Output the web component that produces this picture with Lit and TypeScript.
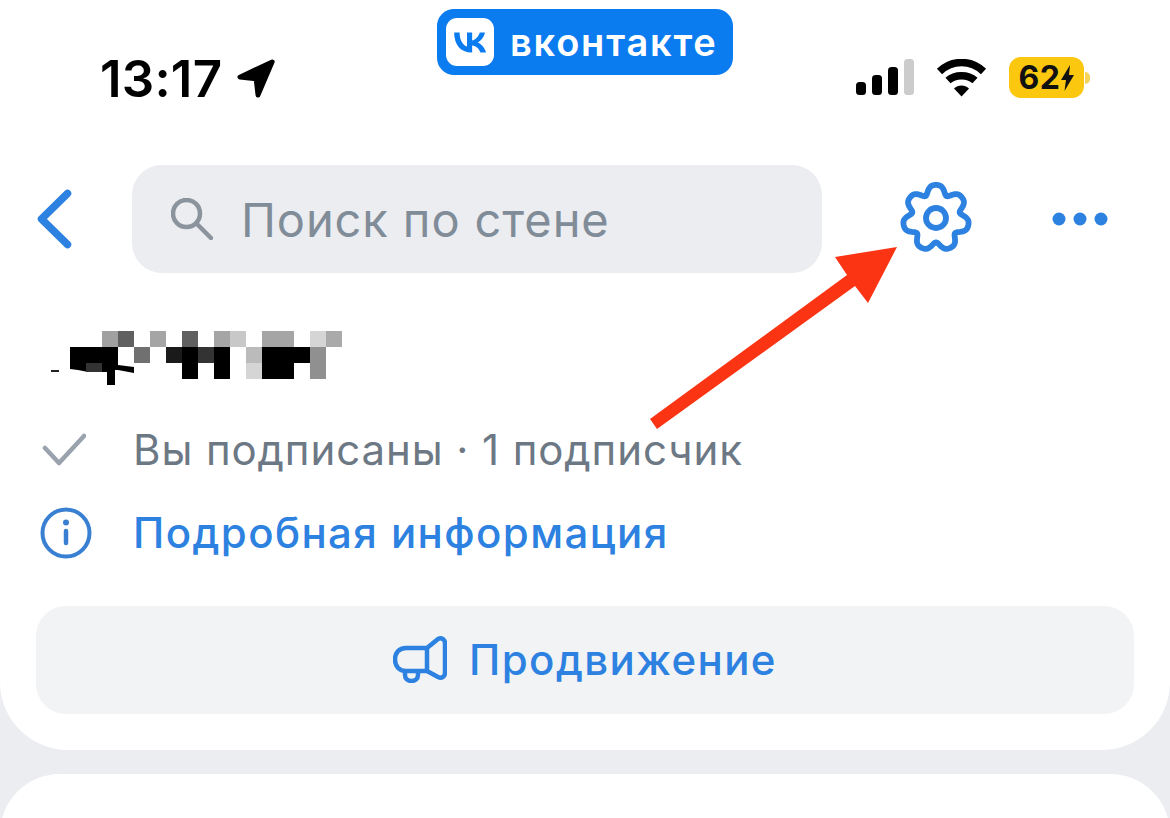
import { LitElement, html, css, svg } from "lit";
import { customElement } from "lit/decorators.js";

const gearPath = (() => {
  const pts: string[] = [];
  for (let i = 0; i < 210; i++) {
    const t = (i / 210) * Math.PI * 2;
    const r = 29.6 + 4.4 * Math.cos(7 * t) - 0.9 * Math.cos(14 * t);
    const a = t - Math.PI / 2;
    pts.push(`${(36 + r * Math.cos(a)).toFixed(2)} ${(36 + r * Math.sin(a)).toFixed(2)}`);
  }
  return "M" + pts.join("L") + "Z";
})();

// column, row, shade of each mosaic tile over the hidden name
const mosaic: [number, number, string][] = [
  [3, 0, "#a0a0a0"], [4, 0, "#606060"], [6, 0, "#a5a5a5"], [8, 0, "#606060"],
  [10, 0, "#a5a5a5"], [11, 0, "#c8c8c8"], [13, 0, "#a5a5a5"], [14, 0, "#a5a5a5"],
  [16, 0, "#d5d5d5"], [17, 0, "#aaaaaa"],
  [1, 1, "#000"], [2, 1, "#000"], [3, 1, "#000"], [5, 1, "#707070"],
  [7, 1, "#1a1a1a"], [8, 1, "#000"], [9, 1, "#333"], [10, 1, "#000"],
  [12, 1, "#bbbbbb"], [13, 1, "#000"], [14, 1, "#000"], [15, 1, "#000"], [16, 1, "#909090"],
  [8, 2, "#000"], [10, 2, "#000"], [12, 2, "#d5d5d5"], [13, 2, "#000"], [14, 2, "#000"], [16, 2, "#909090"],
];

@customElement("app-root")
export class AppRoot extends LitElement {
  static styles = css`
    :host {
      display: block;
      position: relative;
      height: 818px;
      overflow: hidden;
      background: #ebedf0;
      font-family: Inter, "Noto Sans", sans-serif;
    }
    svg { display: block; flex: none; }
    .card {
      background: #fff;
      border-radius: 0 0 68px 68px;
      padding: 0 36px 36px;
      height: 750px;
      box-sizing: border-box;
    }
    .next {
      background: #fff;
      border-radius: 60px 60px 0 0;
      height: 80px;
      margin-top: 24px;
    }
    .status {
      height: 165px;
      display: flex;
      align-items: flex-start;
      justify-content: space-between;
    }
    .left { display: flex; margin: 51px 0 0 64px; gap: 15px; align-items: center; }
    .time { font-size: 51px; font-weight: 600; line-height: 56px; color: #000; letter-spacing: 0.2px; }
    .right { display: flex; margin: 57px 0 0; padding-right: 50px; align-items: flex-start; }
    .sig { margin-right: 22px; margin-top: 2px; }
    .wifi { margin-right: 22px; margin-top: 2px; }
    .batt {
      width: 75px;
      height: 41px;
      background: #fcc70f;
      border-radius: 12px;
      display: flex;
      align-items: center;
      justify-content: center;
      gap: 1px;
      font-size: 32px;
      font-weight: 700;
      letter-spacing: 0.5px;
      color: #111;
      position: relative;
    }
    .batt::after {
      content: "";
      position: absolute;
      right: -6px;
      top: 15px;
      width: 5px;
      height: 12px;
      border-radius: 0 6px 6px 0;
      background: #f5d35a;
    }
    .logo {
      position: absolute;
      left: 437px;
      top: 9px;
      width: 296px;
      height: 66px;
      box-sizing: border-box;
      background: #0a7cf0;
      border-radius: 17px;
      padding: 9px;
      display: flex;
      align-items: center;
      gap: 16px;
    }
    .logo-mark { width: 48px; height: 48px; background: #fff; border-radius: 11px; flex: none; }
    .logo-text { color: #fff; font-size: 38px; font-weight: 600; letter-spacing: 1.8px; line-height: 48px; }
    .bar { height: 108px; display: flex; align-items: center; }
    .back { margin: 0 60px 0 1px; }
    .search {
      width: 690px;
      height: 108px;
      border-radius: 30px;
      background: #ebedf0;
      display: flex;
      align-items: center;
      box-sizing: border-box;
      padding-left: 39px;
      gap: 28px;
      color: #818c99;
      font-size: 47px;
      letter-spacing: 0.9px;
    }
    .gear { margin: -2px 0 0 78px; }
    .dots { margin: 0 0 0 80px; }
    .name { margin: 58px 0 0 14px; }
    .row {
      display: flex;
      align-items: center;
      font-size: 42px;
      line-height: 56px;
      height: 56px;
    }
    .subs { margin-top: 37px; color: #6d7885; letter-spacing: 0.9px; }
    .info { margin-top: 27px; color: #2d81e0; font-weight: 500; letter-spacing: 1.4px; }
    .ic { width: 97px; flex: none; }
    .ic svg { margin-left: 4px; }
    .btn {
      margin-top: 45px;
      height: 108px;
      box-sizing: border-box;
      padding-bottom: 2px;
      border-radius: 30px;
      background: #f2f3f5;
      display: flex;
      align-items: center;
      justify-content: center;
      gap: 22px;
      color: #2d81e0;
      font-size: 42px;
      font-weight: 500;
      letter-spacing: 1.4px;
    }
    .arrow { position: absolute; left: 0; top: 0; }
  `;

  render() {
    return html`
      <div class="card">
        <div class="status">
          <div class="left">
            <span class="time">13:17</span>
            <svg width="40" height="40" viewBox="0 0 42 42">
              <path d="M37 3 3 19 20 21 22 38Z" fill="#000" stroke="#000" stroke-width="5" stroke-linejoin="round"></path>
            </svg>
          </div>
          <div class="right">
            <svg class="sig" width="58" height="36" viewBox="0 0 58 36">
              <rect x="0" y="23" width="10" height="13" rx="3.5" fill="#000"></rect>
              <rect x="16" y="16" width="10" height="20" rx="3.5" fill="#000"></rect>
              <rect x="32" y="8" width="10" height="28" rx="3.5" fill="#000"></rect>
              <rect x="48" y="0" width="10" height="36" rx="3.5" fill="#cccccc"></rect>
            </svg>
            <svg class="wifi" width="51" height="38" viewBox="0 0 51 38">
              <path d="M3.5 12.5C16 0.500 35 0.500 47.500 12.500" fill="none" stroke="#000" stroke-width="7.500" stroke-linecap="butt"></path>
              <path d="M12 21.500C19 15 32 15 39 21.500" fill="none" stroke="#000" stroke-width="7.500"></path>
              <path d="M18 29.500C22 25.500 29 25.500 33 29.500L25.500 37.500Z" fill="#000"></path>
            </svg>
            <div class="batt">
              <span>62</span>
              <svg width="13" height="26" viewBox="0 0 13 26"><path d="M9 0 0 15H5L3.500 26 13 10H8Z" fill="#111"></path></svg>
            </div>
          </div>
        </div>

        <div class="bar">
          <svg class="back" width="35" height="60" viewBox="0 0 35 60">
            <path d="M30.500 4.500 4.500 30 30.500 55.500" fill="none" stroke="#2d81e0" stroke-width="7.500" stroke-linecap="round" stroke-linejoin="round"></path>
          </svg>
          <div class="search">
            <svg width="42" height="42" viewBox="0 0 42 42">
              <circle cx="15.500" cy="15.500" r="13.500" fill="none" stroke="#8b939d" stroke-width="4.500"></circle>
              <path d="M25.500 25.500 40 40" stroke="#8b939d" stroke-width="4.500" stroke-linecap="round"></path>
            </svg>
            <span>Поиск по стене</span>
          </div>
          <svg class="gear" width="72" height="72" viewBox="0 0 72 72">
            <path d=${gearPath} fill="none" stroke="#2d81e0" stroke-width="5.800" stroke-linejoin="round"></path>
            <circle cx="36" cy="36" r="10" fill="none" stroke="#2d81e0" stroke-width="5.800"></circle>
          </svg>
          <svg class="dots" width="56" height="14" viewBox="0 0 56 14">
            <circle cx="7" cy="7" r="6.500" fill="#2d81e0"></circle>
            <circle cx="28" cy="7" r="6.500" fill="#2d81e0"></circle>
            <circle cx="49" cy="7" r="6.500" fill="#2d81e0"></circle>
          </svg>
        </div>

        <svg class="name" width="294" height="54" viewBox="0 0 294 54">
          ${mosaic.map(([c, r, f]) => svg`<rect x=${c * 16 + 4} y=${r * 16} width="16" height="16" fill=${f}></rect>`)}
          <path d="M20 32H68V34L84 36V42L68 39H65V54H57V41H46L38 41 28 39 20 38Z" fill="#000"></path>
          <rect x="36" y="32" width="16" height="9" fill="#333"></rect>
          <rect x="1" y="39" width="8" height="2" fill="#222"></rect>
        </svg>

        <div class="row subs">
          <div class="ic">
            <svg width="46" height="34" viewBox="0 0 46 34">
              <path d="M5 15 19 30 44 3" fill="none" stroke="#99a2ad" stroke-width="4.500" stroke-linecap="round" stroke-linejoin="round"></path>
            </svg>
          </div>
          <span>Вы подписаны · 1 подписчик</span>
        </div>
        <div class="row info">
          <div class="ic">
            <svg width="52" height="52" viewBox="0 0 52 52">
              <circle cx="26" cy="26" r="23.500" fill="none" stroke="#3a80d2" stroke-width="4"></circle>
              <circle cx="26" cy="15.500" r="3" fill="#3a80d2"></circle>
              <path d="M26 24V36" stroke="#3a80d2" stroke-width="4.500" stroke-linecap="round"></path>
            </svg>
          </div>
          <span>Подробная информация</span>
        </div>

        <div class="btn">
          <svg width="54" height="47" viewBox="0 0 54 47">
            <path d="M34 12H13C6 12 2 17 2 23.500 2 30 6 35 13 35H34L45 41C49 43 52 40 52 37V7C52 4 49 1 45 3ZM34 12V35M12 35V39C12 47 25 47 25 39V35" fill="none" stroke="#2d81e0" stroke-width="4.500" stroke-linejoin="round"></path>
          </svg>
          <span>Продвижение</span>
        </div>
      </div>
      <div class="next"></div>

      <div class="logo">
        <div class="logo-mark">
          <svg width="48" height="48" viewBox="0 0 48 48">
            <path d="M25.540 34.580c-10.940 0-17.180-7.500-17.440-19.980h5.480c.18 9.160 4.220 13.040 7.420 13.840V14.600h5.160v7.900c3.160-.34 6.480-3.940 7.600-7.900h5.160c-.86 4.880-4.460 8.480-7.020 9.960 2.560 1.200 6.660 4.340 8.220 10.020h-5.680c-1.220-3.800-4.260-6.740-8.280-7.140v7.140h-.62z" fill="#0a7cf0"></path>
          </svg>
        </div>
        <span class="logo-text">вконтакте</span>
      </div>

      <svg class="arrow" width="1170" height="818" viewBox="0 0 1170 818">
        <polygon points="650,419 847,275 835,257 897,247 868,303 855,286 657,429" fill="#fb3414"></polygon>
      </svg>
    `;
  }
}
